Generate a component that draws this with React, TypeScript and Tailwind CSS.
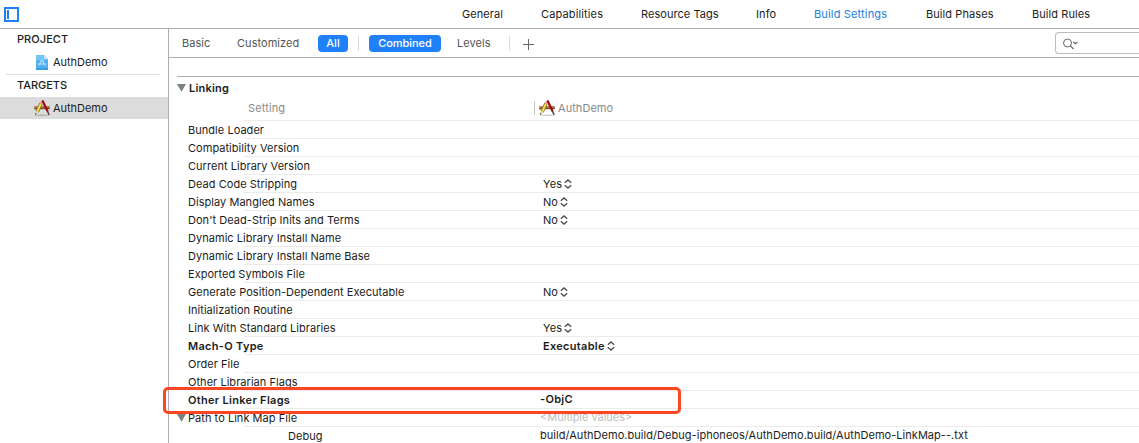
import React from "react";

type Row = { name: string; value?: string; popup?: boolean; bold?: boolean; multiple?: boolean; open?: boolean };

const tabs = [
  { label: "General", cls: "w-[79px] tracking-[0.08px]" },
  { label: "Capabilities", cls: "w-[100px] tracking-[0.14px]" },
  { label: "Resource Tags", cls: "w-[115px]" },
  { label: "Info", cls: "w-[58px] tracking-[0.1px]" },
  { label: "Build Settings", cls: "w-[112px] tracking-[0.16px] text-[#1b7fe0]" },
  { label: "Build Phases", cls: "w-[106px] tracking-[0.08px]" },
  { label: "Build Rules", cls: "tracking-[0.07px]" },
];

const rows: Row[] = [
  { name: "Bundle Loader" },
  { name: "Compatibility Version" },
  { name: "Current Library Version" },
  { name: "Dead Code Stripping", value: "Yes", popup: true },
  { name: "Display Mangled Names", value: "No", popup: true },
  { name: "Don't Dead-Strip Inits and Terms", value: "No", popup: true },
  { name: "Dynamic Library Install Name" },
  { name: "Dynamic Library Install Name Base" },
  { name: "Exported Symbols File" },
  { name: "Generate Position-Dependent Executable", value: "No", popup: true },
  { name: "Initialization Routine" },
  { name: "Link With Standard Libraries", value: "Yes", popup: true },
  { name: "Mach-O Type", value: "Executable", popup: true, bold: true },
  { name: "Order File" },
  { name: "Other Librarian Flags" },
  { name: "Other Linker Flags", value: "-ObjC", bold: true },
  { name: "Path to Link Map File", value: "<Multiple values>", multiple: true, open: true },
];

function AppIcon() {
  return (
    <svg width="16" height="16" viewBox="0 0 16 16" className="shrink-0">
      <ellipse cx="8" cy="15.2" rx="7.5" ry="0.7" fill="#000" opacity="0.2" />
      <path d="M0.2 6.2 15.6 6 15.9 8.6 0.2 9Z" fill="#a87840" />
      <path d="M0.2 8.9 15.9 8.5" stroke="#5f3c18" strokeWidth="0.9" />
      <path d="M7 3.4 3.2 11.8" stroke="#7a5a1a" strokeWidth="3.4" />
      <path d="M7 3.4 3.2 11.8" stroke="#f3e05a" strokeWidth="2.1" />
      <path d="M7.7 1.8 6.8 3.8" stroke="#e0a095" strokeWidth="2.6" />
      <path d="M1.8 11 1 15 4.6 12.5Z" fill="#ecd0a0" />
      <path d="M1.3 13.2 1 15 2.7 13.8Z" fill="#222" />
      <path d="M8.8 1.2 13.2 10.6" stroke="#a30d16" strokeWidth="2.3" strokeLinecap="round" />
      <path d="M13.2 10.6 15.2 15" stroke="#5a3434" strokeWidth="1.4" />
    </svg>
  );
}

function ProjectIcon() {
  return (
    <svg width="12" height="15" viewBox="0 0 12 15" className="shrink-0">
      <path d="M0 0H8L12 4V15H0Z" fill="#4fb0f2" />
      <path d="M0 0H8L12 4V5H0Z" fill="#72c4f6" />
      <path d="M8 0V4H12Z" fill="#c3e7fb" />
      <path d="M5.6 5 3 10.5M6.2 5 9 10.5M2 9H10" stroke="#b4e0fd" strokeWidth="1.2" fill="none" />
      <path d="M0 13H12V15H0Z" fill="#3c9ddd" />
    </svg>
  );
}

function Stepper() {
  return (
    <svg width="8" height="10" viewBox="0 0 8 10" className="shrink-0" fill="none" stroke="#4d4d4d" strokeWidth="1.3">
      <path d="M0.8 3.8 4 0.9 7.2 3.8M0.8 6.2 4 9.1 7.2 6.2" />
    </svg>
  );
}

function Disclosure() {
  return (
    <svg width="9" height="8" viewBox="0 0 9 8" className="shrink-0">
      <path d="M0 0H9L4.5 7.8Z" fill="#7f7f7f" />
    </svg>
  );
}

function SettingRow({ row }: { row: Row }) {
  return (
    <div className="flex h-[18px] shrink-0">
      <div className="flex w-[19px] items-center pl-2">{row.open && <Disclosure />}</div>
      <div className="relative flex flex-1 items-center">
        <div className={row.bold ? "w-[352px] font-semibold tracking-[0.3px]" : "w-[352px] tracking-[0.04px]"}>{row.name}</div>
        {row.value && (
          <div
            className={
              "flex items-center gap-[2px]" +
              (row.popup ? " pl-[3px]" : " pb-[2px]") +
              (row.bold ? " font-semibold tracking-[0.3px]" : "") +
              (row.multiple ? " tracking-[-0.03px] text-[#bdbdbd]" : "")
            }
          >
            {row.value}
            {row.popup && <Stepper />}
          </div>
        )}
        <div className="absolute right-0 bottom-0 left-[56px] h-px bg-[#ebebeb]" />
      </div>
    </div>
  );
}

export default function App() {
  return (
    <div className="flex h-[443px] w-[1139px] flex-col overflow-hidden bg-white font-['Inter',sans-serif] text-[11px] leading-[14px] tracking-[0.05px] whitespace-nowrap text-[#1c1c1c]">
      <header className="flex h-[29px] shrink-0 items-center border-b border-[#adadad] pl-1">
        <div className="w-[458px]">
          <svg width="15" height="15" viewBox="0 0 15 15" fill="none">
            <path d="M1 1H14V14H1Z" stroke="#2080f8" strokeWidth="2" />
            <path d="M4 3V12" stroke="#2080f8" strokeWidth="2" />
          </svg>
        </div>
        {tabs.map((t) => (
          <div key={t.label} className={t.cls}>{t.label}</div>
        ))}
      </header>

      <div className="flex min-h-0 flex-1">
        <aside className="flex w-[169px] shrink-0 flex-col border-r border-[#adadad] tracking-[-0.04px]">
          <div className="flex h-[21px] items-center pb-[2px] pl-[17px] font-medium tracking-[0.05px]">PROJECT</div>
          <div className="flex h-6 items-center gap-[5px] pl-9">
            <ProjectIcon />
            AuthDemo
          </div>
          <div className="mr-2 ml-1.5 h-px bg-[#dedede]" />
          <div className="flex h-[22px] items-center pb-[2px] pl-[17px] font-medium">TARGETS</div>
          <div className="flex h-[22px] items-center gap-[3px] bg-[#dcdcdc] pl-[34px]">
            <AppIcon />
            AuthDemo
          </div>
        </aside>

        <main className="flex min-w-0 flex-1 flex-col">
          <div className="flex h-[29px] shrink-0 items-center border-b border-[#adadad] text-[#555]">
            <div className="w-[68px] pl-[13px]">Basic</div>
            <div className="w-[81px]">Customized</div>
            <div className="flex h-[17px] w-[30px] items-center justify-center rounded bg-[#2080f8] font-medium text-white">All</div>
            <div className="mx-[10px] h-[15px] w-px bg-[#dcdcdc]" />
            <div className="flex h-[17px] w-[72px] items-center justify-center rounded bg-[#2080f8] font-medium tracking-[-0.05px] text-white">Combined</div>
            <div className="w-[68px] pl-4">Levels</div>
            <div className="h-[15px] w-px bg-[#dcdcdc]" />
            <svg width="11" height="11" viewBox="0 0 11 11" className="mt-0.5 ml-[13px]" stroke="#666" fill="none">
              <path d="M5.5 0V11M0 5.5H11" />
            </svg>
            <div className="ml-auto flex h-[22px] w-[84px] items-center rounded-l-[4px] border border-r-0 border-[#bcbcbc] pl-[7px]">
              <svg width="16" height="12" viewBox="0 0 16 12" fill="none" stroke="#666" className="mt-px">
                <circle cx="4.5" cy="5" r="4" />
                <path d="M7.4 7.9 10.5 11M10.3 4 12.4 5.8 14.5 4" strokeWidth="1.2" />
              </svg>
            </div>
          </div>

          <div className="mt-[18px] ml-2 h-px shrink-0 bg-[#adadad]" />
          <div className="flex h-[22px] shrink-0 items-center gap-[3px] pl-2 font-semibold tracking-[0.2px]">
            <Disclosure />
            Linking
          </div>
          <div className="flex h-[22px] shrink-0">
            <div className="w-[75px]" />
            <div className="flex flex-1 items-center border-b border-[#ebebeb] pb-[3px] pl-1 text-[#8a8a8a]">
              <div className="w-[286px] tracking-[0.12px]">Setting</div>
              <div className="h-[14px] w-px bg-[#c4c4c4]" />
              <div className="flex items-center gap-[3px] pl-1">
                <AppIcon />
                AuthDemo
              </div>
            </div>
          </div>

          <div className="relative flex flex-col">
            {rows.map((r) => (
              <SettingRow key={r.name} row={r} />
            ))}
            <div className="flex h-[18px] shrink-0 items-center">
              <div className="w-[371px] pl-[119px]">Debug</div>
              <div className="pb-[2px] tracking-[0.04px]">build/AuthDemo.build/Debug-iphoneos/AuthDemo.build/AuthDemo-LinkMap--.txt</div>
            </div>
            <div className="absolute top-[266px] left-[-6px] h-[27px] w-[518px] rounded-[5px] border-3 border-[#fb4523]" />
          </div>
        </main>
      </div>
    </div>
  );
}
